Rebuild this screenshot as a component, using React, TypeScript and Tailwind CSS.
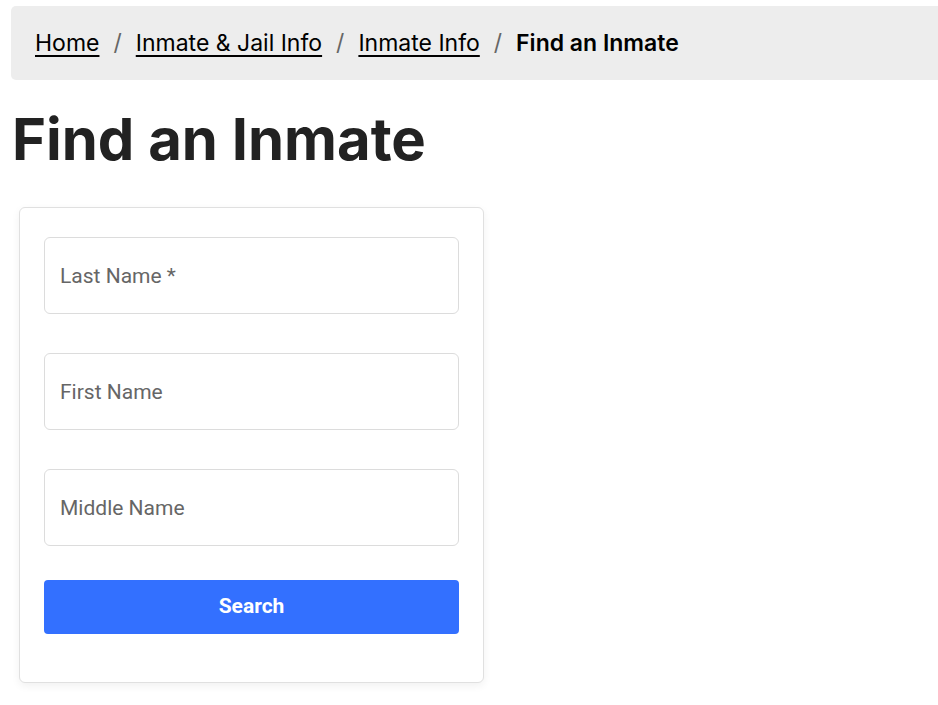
export default function App() {
  const crumbs = ['Home', 'Inmate & Jail Info', 'Inmate Info']
  const fields = ['Last Name *', 'First Name', 'Middle Name']

  return (
    <div className="min-h-screen bg-white pt-[6px] pl-[11px]" style={{ fontFamily: 'Inter, "Noto Sans", sans-serif' }}>
      {/* Breadcrumb */}
      <nav className="h-[74px] bg-[#ededed] rounded-l-[5px] flex items-center pl-[24px] text-[23px] text-black">
        {crumbs.map(c => (
          <span key={c} className="flex items-center">
            <a href="#" className="underline underline-offset-[4px] decoration-[2px]">{c}</a>
            <span className="mx-[14px] text-[#666]">/</span>
          </span>
        ))}
        <span className="font-semibold">Find an Inmate</span>
      </nav>

      <h1 className="mt-[24px] ml-[1px] text-[58px] leading-[70px] font-bold text-[#222]">Find an Inmate</h1>

      {/* Search form */}
      <div className="mt-[33px] ml-[8px] w-[465px] bg-white border border-[#e0e0e0] rounded-[6px] shadow-[0_3px_8px_rgba(0,0,0,0.06)] px-[24px] pt-[29px] pb-[48px]">
        <div className="flex flex-col gap-[39px]">
          {fields.map(f => (
            <input
              key={f}
              type="text"
              placeholder={f}
              className="h-[77px] w-full border border-[#dcdcdc] rounded-[6px] px-[15px] text-[21px] text-[#333] placeholder:text-[#666] outline-none"
              style={{ fontFamily: 'Roboto, Inter, sans-serif' }}
            />
          ))}
        </div>
        <button className="mt-[34px] w-full h-[54px] bg-[#3370ff] rounded-[4px] text-white text-[21px] font-bold" style={{ fontFamily: 'Roboto, Inter, sans-serif' }}>
          Search
        </button>
      </div>
    </div>
  )
}
